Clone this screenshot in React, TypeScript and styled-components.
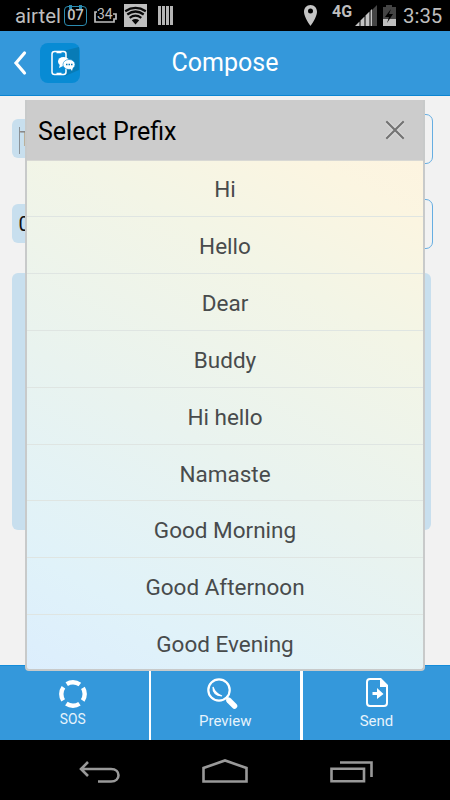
import React from "react";
import styled, { createGlobalStyle } from "styled-components";

const GlobalStyle = createGlobalStyle`
  * { box-sizing: border-box; }
  body { margin: 0; background: #000; font-family: Roboto, sans-serif; }
  svg { display: block; flex: none; }
`;

const Screen = styled.div`
  position: relative;
  width: 450px;
  height: 800px;
  display: flex;
  flex-direction: column;
  overflow: hidden;
`;

const StatusBar = styled.div`
  height: 31px;
  flex: none;
  display: flex;
  align-items: center;
  background: #000;
  color: #bebebe;
`;

const StatusText = styled.span<{ $width: number; $left?: number }>`
  width: ${p => p.$width}px;
  margin-left: ${p => p.$left ?? 0}px;
  font-size: 20.4px;
  line-height: 31px;
  padding-top: 1px;
  white-space: nowrap;
`;

const Calendar = styled.div`
  position: relative;
  width: 23px;
  height: 20px;
  margin: 1px 0 0 3px;
  border: 1.5px solid #2b8bb0;
  border-radius: 4px;
  color: #c4c4c4;
  font-size: 14.5px;
  font-weight: 500;
  line-height: 17px;
  text-align: center;
  &::before, &::after {
    content: "";
    position: absolute;
    top: -2px;
    width: 3px;
    height: 4px;
    background: #2b8bb0;
  }
  &::before { left: 4px; }
  &::after { right: 4px; }
`;

const Battery = styled.div`
  position: relative;
  width: 23px;
  height: 31px;
  margin: 0 7px;
`;

const BatteryValue = styled.span`
  position: absolute;
  left: 3px;
  top: 7px;
  font-size: 14px;
  line-height: 15px;
`;

const PinIcon = styled.svg`
  margin-left: 130px;
`;

const Network = styled.span`
  width: 22px;
  margin: -8px 0 0 13px;
  font-size: 16px;
  font-weight: 700;
  line-height: 18px;
`;

const Header = styled.header`
  height: 65px;
  flex: none;
  display: grid;
  grid-template-columns: 1fr auto 1fr;
  align-items: center;
  background: #3498db;
  border-bottom: 1px solid #0b85d2;
  color: #fff;
`;

const HeaderLeft = styled.div`
  display: flex;
  align-items: center;
  padding-left: 12px;
  gap: 12px;
`;

const Title = styled.h1`
  margin: 0;
  font-size: 25px;
  font-weight: 400;
  line-height: 30px;
`;

const Content = styled.main`
  flex: 1;
  padding: 16px 17px 0 12px;
  background: #f2f2f2;
`;

const FormRow = styled.div`
  display: flex;
  align-items: center;
  height: 53px;
  margin-bottom: 32px;
`;

const FieldLabel = styled.div<{ $hint?: boolean }>`
  width: 160px;
  height: 39px;
  padding-left: 6.5px;
  border-radius: 6px;
  background: #c8dfee;
  color: ${p => (p.$hint ? "#888" : "#111")};
  font-size: 20px;
  line-height: 40px;
`;

const Caret = styled.span`
  display: inline-block;
  width: 1px;
  height: 27px;
  vertical-align: middle;
  background: #8a9298;
`;

const FieldBox = styled.div`
  width: 250px;
  height: 50px;
  margin-left: auto;
  border: 1.5px solid #66aee2;
  border-radius: 7px;
`;

const Message = styled.div`
  width: 419px;
  height: 257px;
  margin-top: -9px;
  border-radius: 6px;
  background: #c8dfee;
`;

const Tabs = styled.nav`
  height: 75px;
  flex: none;
  display: grid;
  grid-template-columns: 148.5px 149px 147px;
  gap: 2.75px;
  background: #fff;
`;

const Tab = styled.button<{ $top: number; $shift?: number; $size?: number }>`
  display: flex;
  flex-direction: column;
  align-items: center;
  padding: ${p => p.$top}px 3px 0 ${p => p.$shift ?? 0}px;
  border: 0;
  border-top: 1px solid #148cda;
  background: #3498db;
  color: #e6f3fc;
  font-family: Roboto, sans-serif;
  font-size: ${p => p.$size ?? 15}px;
  line-height: 18px;
`;

const SystemNav = styled.div`
  height: 60px;
  flex: none;
  display: flex;
  align-items: flex-start;
  gap: 80px;
  padding: 18px 0 0 77px;
  background: #000;
`;

const NavIcon = styled.svg`
  fill: none;
  stroke: #999;
  stroke-width: 2.6;
`;

const Dialog = styled.section`
  position: absolute;
  left: 25px;
  top: 100px;
  width: 400px;
  height: 571px;
  display: flex;
  flex-direction: column;
  border: 2px solid #c8caca;
  border-top: 0;
  border-radius: 0 0 4px 4px;
  overflow: hidden;
  background: linear-gradient(29deg, #dceefd 0%, #e0f2f9 15%, #e9f3ef 41%, #f3f5e6 68%, #fbf5e1 84%, #fff3df 100%);
`;

const DialogHeader = styled.div`
  height: 61px;
  flex: none;
  margin: 0 -2px;
  padding: 2px 20px 0 13px;
  display: flex;
  align-items: center;
  justify-content: space-between;
  border-bottom: 1px solid #d8d8d4;
  background: #ccc;
  color: #000;
  font-size: 25px;
`;

const CloseIcon = styled.svg`
  margin-top: -2px;
`;

const Options = styled.ul`
  list-style: none;
  margin: 0;
  padding: 0;
`;

const Option = styled.li`
  height: 56.9px;
  border-bottom: 1px solid #dfe5e2;
  color: #484b4c;
  font-size: 22.5px;
  line-height: 58px;
  text-align: center;
  &:first-child { height: 56px; line-height: 57px; }
  &:last-child { border-bottom: 0; }
`;

const prefixes = ["Hi", "Hello", "Dear", "Buddy", "Hi hello", "Namaste", "Good Morning", "Good Afternoon", "Good Evening"];

const WifiIcon = () => (
  <svg width="23" height="23" viewBox="0 0 23 23">
    <path d="M0 0h23v23H0z" fill="#bebebe" />
    <path d="M11.5 20.5 7.8 16.300q3.700-2.600 7.400 0z" fill="#080808" />
    <path d="M5.700 13.800q5.800-4.300 11.600 0M3.300 10.500q8.200-6 16.400 0M1.200 7.200q10.300-6.500 20.600 0" fill="none" stroke="#080808" strokeWidth="2.200" />
  </svg>
);

const AppIcon = () => (
  <svg width="40" height="40" viewBox="0 0 40 40">
    <rect width="40" height="40" rx="8" fill="#088bd4" />
    <path d="M25 7.500 39 4v23l-14 6z" fill="#087bb6" />
    <rect x="12" y="8.500" width="14" height="23" rx="2.500" fill="#088bd4" stroke="#fff" strokeWidth="1.500" />
    <path d="M16.500 9.500h5M16.500 30.500h5" stroke="#fff" strokeWidth="1.500" />
    <ellipse cx="23.500" cy="18.500" rx="5.500" ry="4.500" fill="#fff" />
    <path d="m20 21-1 4 4-2" fill="#fff" />
    <ellipse cx="29" cy="21.500" rx="6" ry="5" fill="#fff" stroke="#088bd4" strokeWidth=".6" />
    <path d="m30 25 2 3 1-4" fill="#fff" />
    <path d="M26 21.500h1.500m1 0H30m1 0h1.500" stroke="#087bb6" strokeWidth="1.500" />
  </svg>
);

export default function App() {
  return (
    <>
      <GlobalStyle />
      <Screen>
        <StatusBar>
          <StatusText $left={15} $width={46}>airtel</StatusText>
          <Calendar>07</Calendar>
          <Battery>
            <svg width="23" height="31" viewBox="0 0 23 31" fill="none" stroke="#bebebe" strokeWidth="1.700">
              <path d="M3 12H1v10h19v-3h2v-5h-3" />
            </svg>
            <BatteryValue>34</BatteryValue>
          </Battery>
          <WifiIcon />
          <svg width="27" height="31" viewBox="0 0 27 31"><path d="M11 6h3v19h-3zM15 6h3v19h-3zM19 6h3v19h-3zM23 6h3v19h-3z" fill="#b5b5b5" /></svg>
          <PinIcon width="15" height="31" viewBox="0 0 15 31"><path fillRule="evenodd" d="M6.500 5C2.500 5 0 8 0 12c0 5 6.500 14 6.500 14S13 17 13 12c0-4-2.500-7-6.500-7zm0 3.500a2.500 2.500 0 1 1 0 5 2.500 2.500 0 0 1 0-5z" fill="#c4c4c4" /></PinIcon>
          <Network>4G</Network>
          <svg width="25" height="31" viewBox="0 0 25 31"><path d="m1 26 4.500-4.500V26zm5.500-5.500 4-4V26h-4zm5-5 4-4V26h-4zM16.500 10.500l1.500-1.500v17h-1.500z" fill="#c4c4c4" /><path d="m18 10 5-5v21h-5z" fill="#444" /></svg>
          <svg width="18" height="31" viewBox="0 0 18 31"><path d="M7 5h6v2h4v19H4V7h3z" fill="#444" /><path d="M4 19h13v7H4z" fill="#bebebe" /><path d="m12 9-6 8h4l-2 6 6-9h-4z" fill="#000" /></svg>
          <StatusText $left={6} $width={42}>3:35</StatusText>
        </StatusBar>
        <Header>
          <HeaderLeft>
            <svg width="16" height="28" viewBox="0 0 16 28"><path d="M12.500 4 4 14l8.500 10" fill="none" stroke="#fff" strokeWidth="3.200" strokeLinecap="round" /></svg>
            <AppIcon />
          </HeaderLeft>
          <Title>Compose</Title>
        </Header>
        <Content>
          <FormRow><FieldLabel $hint><Caret />T</FieldLabel><FieldBox /></FormRow>
          <FormRow><FieldLabel>0</FieldLabel><FieldBox /></FormRow>
          <Message />
        </Content>
        <Tabs>
          <Tab $top={14} $size={13.8}>
            <svg width="30" height="30" viewBox="0 0 30 30"><circle cx="15" cy="14" r="11.700" fill="none" stroke="#fff" strokeWidth="4.400" strokeDasharray="13.900 4.478" strokeDashoffset="6.950" /></svg>
            SOS
          </Tab>
          <Tab $top={10} $shift={2}>
            <svg width="38" height="36" viewBox="0 0 38 36"><circle cx="13" cy="14" r="10.700" fill="none" stroke="#fff" strokeWidth="2.200" /><path d="M7 11q-.5 8 9 9-7-2.500-9-9z" fill="#fff" stroke="#fff" strokeWidth="1.200" /><path d="m20 21 3 3" stroke="#fff" strokeWidth="3" /><path d="m23 24.500 5.500 5.500" stroke="#fff" strokeWidth="5.500" strokeLinecap="round" /></svg>
            Preview
          </Tab>
          <Tab $top={10} $shift={3}>
            <svg width="24" height="36" viewBox="0 0 24 36"><path d="M15 3H5Q2 3 2 6v21q0 3 3 3h14q3 0 3-3V11" fill="none" stroke="#fff" strokeWidth="2" /><path d="M15 2v9h8v-2l-7-7zM7.500 16h4.500v-4l6.500 6-6.500 5v-4H7.500z" fill="#fff" /></svg>
            Send
          </Tab>
        </Tabs>
        <SystemNav>
          <NavIcon width="45" height="28" viewBox="0 0 45 28"><path d="m11 4-7 7 7 7M4 11h30c10 0 10 12.500 0 12.500H21" /></NavIcon>
          <NavIcon width="47" height="28" viewBox="0 0 47 28"><path d="M1.500 23.500V10L23 2.500 44.500 10v13.500z" /></NavIcon>
          <NavIcon width="45" height="28" viewBox="0 0 45 28"><path d="M2.500 10.800H35v12.500H2.500zM11 4.500h31.500v14.500" /></NavIcon>
        </SystemNav>
        <Dialog role="dialog">
          <DialogHeader>
            Select Prefix
            <CloseIcon width="20" height="20" viewBox="0 0 20 20"><path d="m2 2 16 16M18 2 2 18" stroke="#ddd" strokeWidth="4" /><path d="m2 2 16 16M18 2 2 18" stroke="#747474" strokeWidth="2.300" strokeLinecap="round" /></CloseIcon>
          </DialogHeader>
          <Options>{prefixes.map(prefix => <Option key={prefix}>{prefix}</Option>)}</Options>
        </Dialog>
      </Screen>
    </>
  );
}
